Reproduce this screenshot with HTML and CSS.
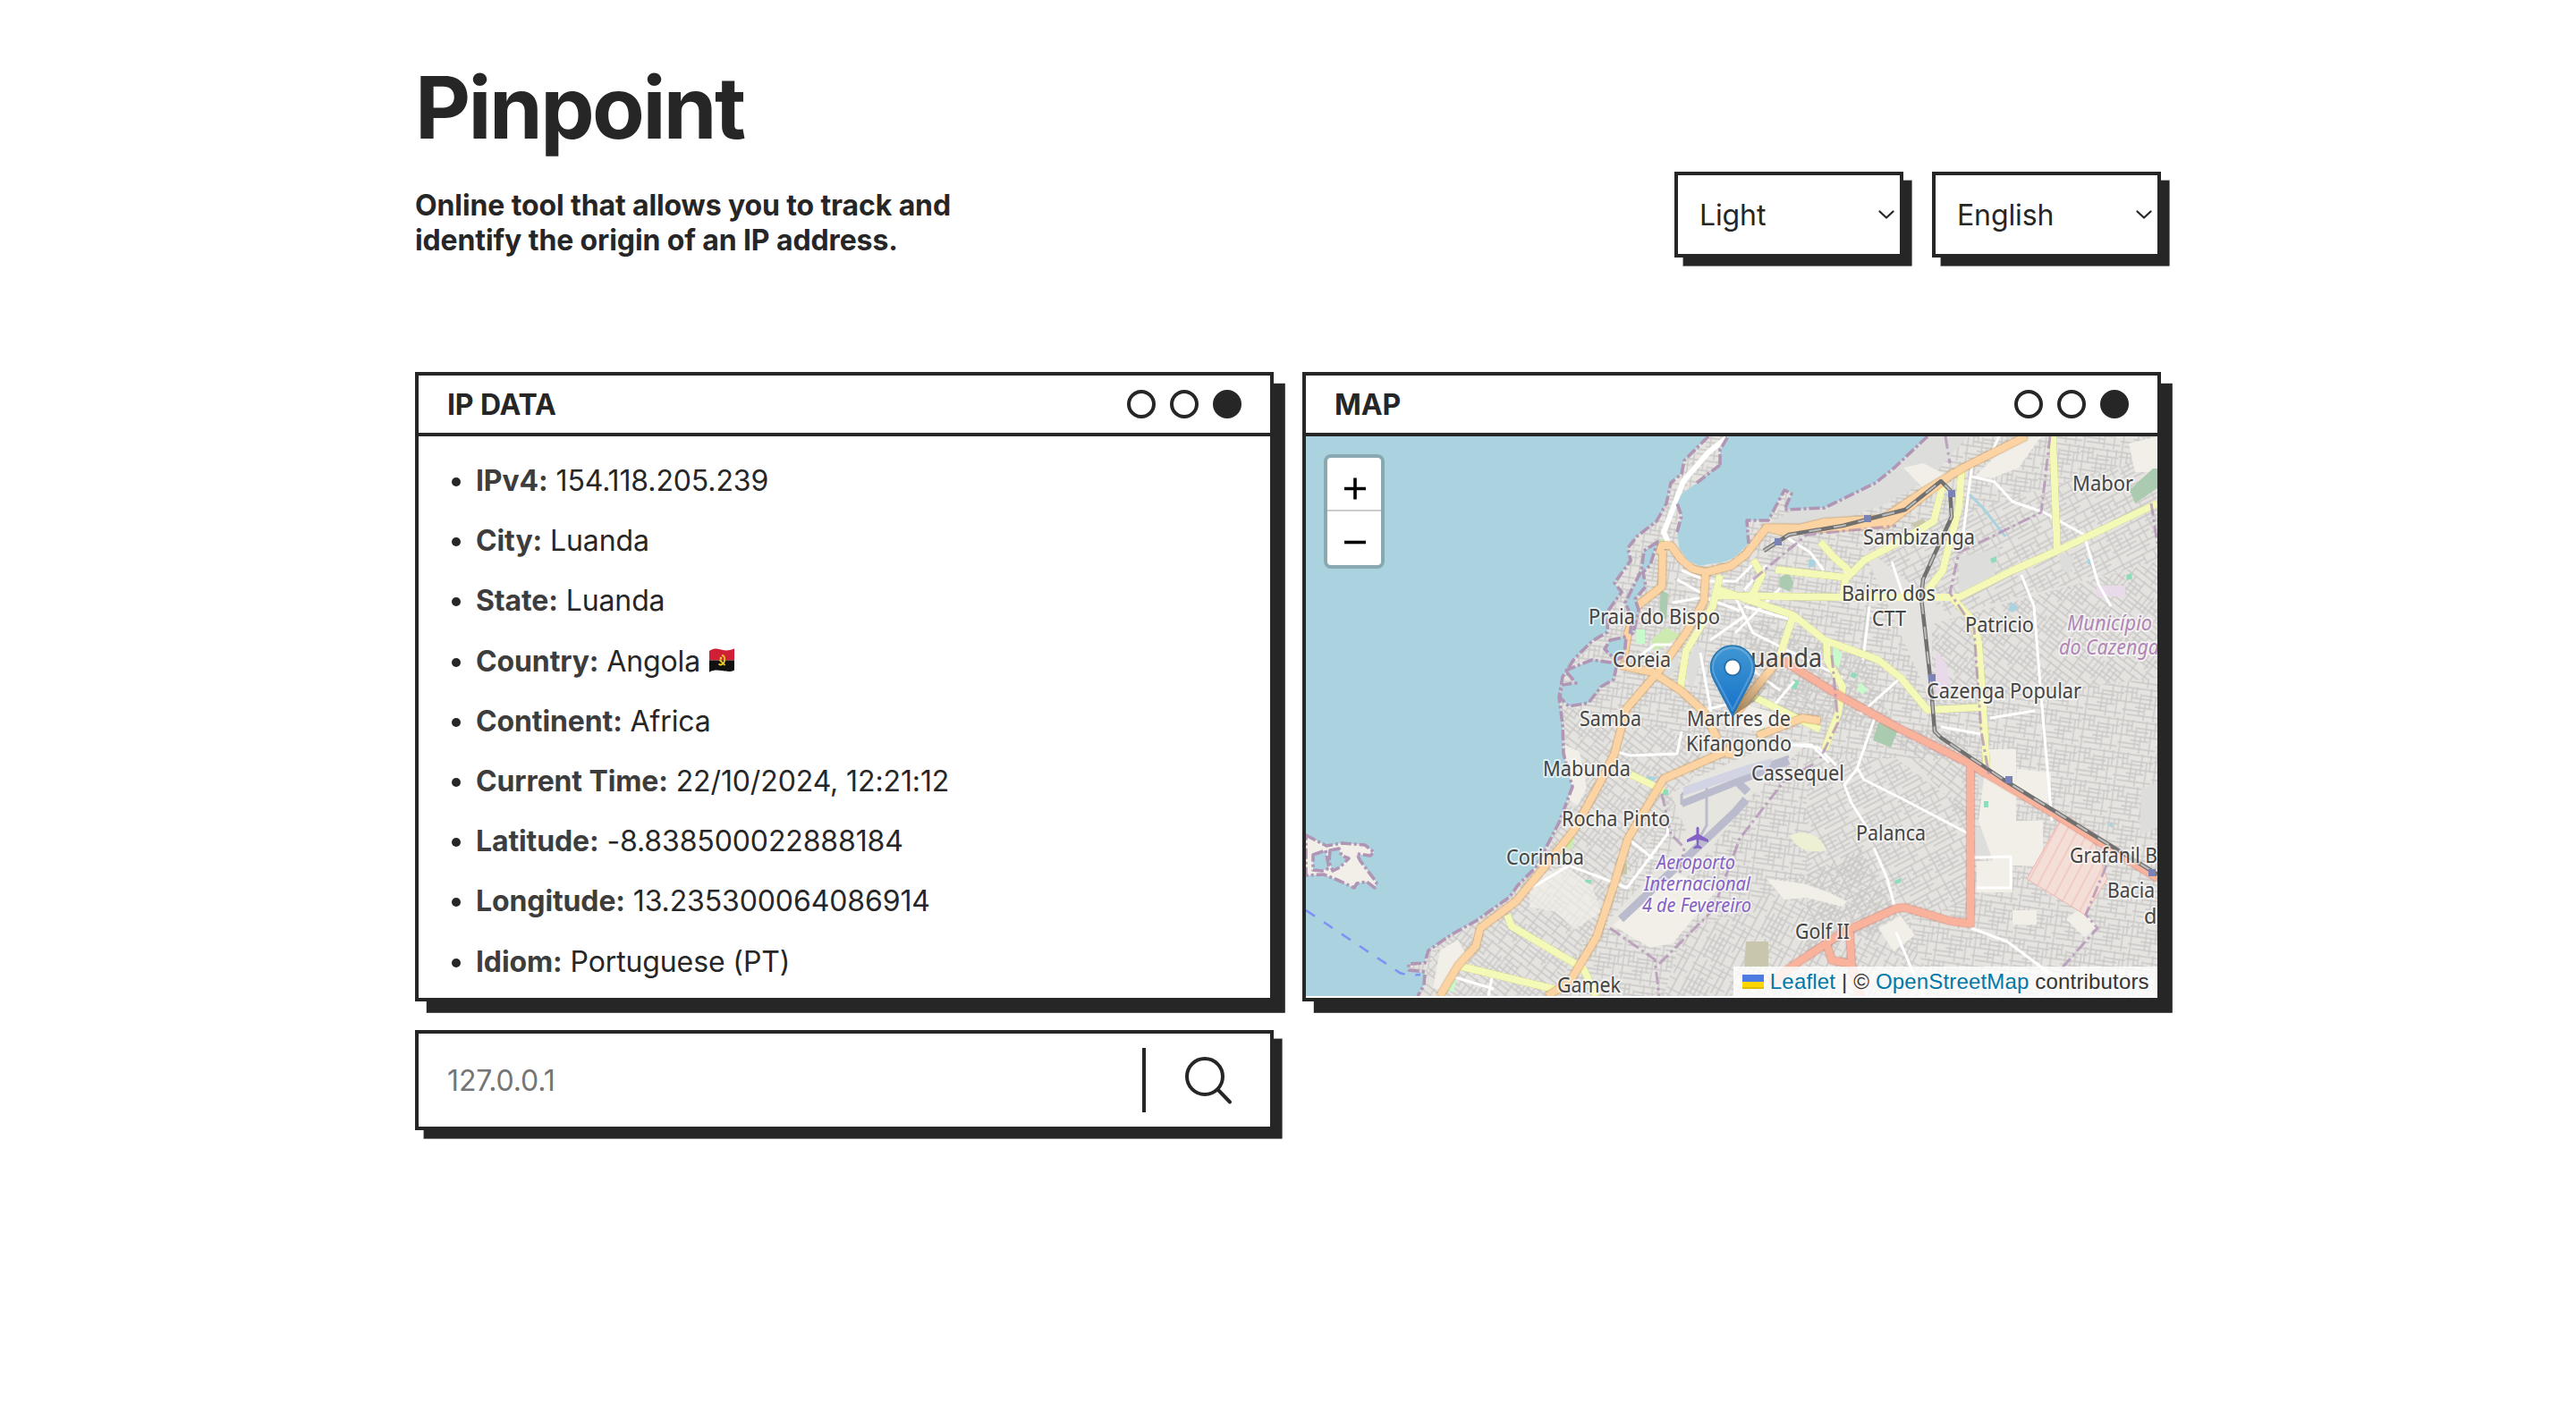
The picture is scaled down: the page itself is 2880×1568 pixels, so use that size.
FILE: index.html
```html
<!DOCTYPE html>
<html lang="en">
<head>
<meta charset="utf-8">
<title>Pinpoint</title>
<link rel="stylesheet" href="styles.css">
</head>
<body>
<div class="page">
  <header class="header">
    <div class="intro">
      <h1 class="title">Pinpoint</h1>
      <p class="subtitle">Online tool that allows you to track and<br>identify the origin of an IP address.</p>
    </div>
    <div class="options">
      <div class="select"><span>Light</span><svg width="18" height="10" viewBox="0 0 18 10"><path d="M1.5 1.5 9 8.5l7.500-7"/></svg></div>
      <div class="select"><span>English</span><svg width="18" height="10" viewBox="0 0 18 10"><path d="M1.500 1.500 9 8.500l7.500-7"/></svg></div>
    </div>
  </header>

  <main class="windows">
    <section class="window">
      <div class="bar"><h2>IP DATA</h2><div class="dots"><i></i><i></i><i class="on"></i></div></div>
      <ul class="data">
        <li><b>IPv4:</b> 154.118.205.239</li>
        <li><b>City:</b> Luanda</li>
        <li><b>State:</b> Luanda</li>
        <li><b>Country:</b> Angola <svg class="flag" width="28" height="27" viewBox="0 0 28 22" preserveAspectRatio="none"><path fill="#d01f36" d="M0 2.500C6-.5 9 .5 14 1.500S24 2 28 .3V11H0z"/><path fill="#111" d="M0 11h28v9c-5 2-9 1-14 .4S5 19.500 0 21.700z"/><path d="M14 6.500c4 0 4.500 6 .5 8-1.500.8-3 .5-4-.3M11.500 10.500l6 5" fill="none" stroke="#f5cf1d" stroke-width="1.600"/><circle cx="13" cy="9" r="1.300" fill="#f5cf1d"/></svg></li>
        <li><b>Continent:</b> Africa</li>
        <li><b>Current Time:</b> 22/10/2024, 12:21:12</li>
        <li><b>Latitude:</b> -8.838500022888184</li>
        <li><b>Longitude:</b> 13.235300064086914</li>
        <li><b>Idiom:</b> Portuguese (PT)</li>
      </ul>
    </section>

    <section class="window">
      <div class="bar"><h2>MAP</h2><div class="dots"><i></i><i></i><i class="on"></i></div></div>
      <div class="map">
        <svg class="tiles" width="952" height="626" viewBox="0 0 952 626">
          <defs>
            <pattern id="s1" width="43" height="37" patternUnits="userSpaceOnUse" patternTransform="rotate(8)"><path class="st" d="M0 2h43M0 7h14M20 9h23M8 13h25M0 18h43M14 23h20M0 27h24M5 32h38M3 0v37M9 2v16M14 0v12M19 7v25M25 18v19M30 0v23M36 9v28M40 0v18"/></pattern>
            <pattern id="s2" width="49" height="37" patternUnits="userSpaceOnUse" patternTransform="rotate(-28)"><path class="st" d="M0 1h49M0 6h29M0 11h18M26 11h23M6 16h43M0 21h30M0 26h49M12 31h30M4 0v37M12 1v20M21 6v20M29 0v16M35 16v21M42 0v26"/></pattern>
            <pattern id="s3" width="41" height="45" patternUnits="userSpaceOnUse" patternTransform="rotate(38)"><path class="st" d="M0 2h41M0 8h21M5 13h36M0 19h22M0 24h41M16 29h25M0 34h28M0 40h41M2 0v45M8 2v22M14 8v32M20 0v18M27 13v32M33 0v29M38 8v26"/></pattern>
            <pattern id="s4" width="51" height="47" patternUnits="userSpaceOnUse" patternTransform="rotate(-62)"><path class="st" d="M0 3h51M0 8h30M9 13h42M0 18h31M0 23h51M0 29h26M20 34h31M0 40h51M3 0v47M9 3v20M15 8v32M22 0v23M28 13v34M35 3v26M41 0v40M47 18v29"/></pattern>
            <pattern id="hatch" width="11" height="11" patternUnits="userSpaceOnUse" patternTransform="rotate(28)"><rect width="11" height="11" fill="#f3dfd8"/><path d="M1 0v11" stroke="#f2c3bd" stroke-width="1.500"/></pattern>
            <path id="land" d="M450 0 423 27 420 42 408 52 403 75 392 95 370 112 360 125 363 139 345 164 353 174 338 195 337 219 320 229 300 249 287 269 283 292 287 322 288 355 298 392 283 432 257 482 237 502 228 515 190 542 163 557 137 575 133 589 115 590 115 597 133 599 132 614 125 626H952V0H695L658 35 637 52 580 80 535 82 543 64 535 60 517 94 493 94 495 120 480 135 470 140 440 145 427 139 417 125 415 107 420 89 415 75 420 64 437 52 463 32 463 15 472 0z"/>
            <clipPath id="clip"><use href="#land"/></clipPath>
            <linearGradient id="pin" x2="0" y2="1"><stop offset="0" stop-color="#4197d3"/><stop offset="1" stop-color="#1671c9"/></linearGradient>
            <linearGradient id="shade" gradientUnits="userSpaceOnUse" x1="477" y1="313" x2="512" y2="262"><stop offset="0" stop-color="#3b2a10" stop-opacity=".55"/><stop offset="1" stop-color="#3b2a10" stop-opacity="0"/></linearGradient>
          </defs>
          <rect width="952" height="626" fill="#aad3df"/>
          <use href="#land" fill="#f0ede7"/>
          <g clip-path="url(#clip)">
            <rect width="952" height="626" fill="#e6e4e0"/>
            <path fill="url(#s1)" d="M0 0h952v626H0z"/>
            <path fill="#e5e3df" d="M620 120 952 20v250L700 300zM280 300l180 40-60 90-130 200H120zM560 360l180 0v160l-180 60zM420 560l200-100 90 166H400z"/>
            <path fill="url(#s2)" d="M620 120 952 20v120L720 200zM560 360h100l80 60v100l-180 60z"/>
            <path fill="url(#s3)" d="M280 300l180 40-60 90-130 200H120zM700 210l252-70v130l-252 30zM650 330h90v100z"/>
            <path fill="url(#s4)" d="M420 560l200-100 90 166H400zM480 200l140 40 40 90-130-20z"/>
            <path fill="#dddddc" d="M520 96 545 82 580 80 655 38 695 0 740 0 700 45 650 75 590 96 530 104zM730 135l45-10-5 30-40 22zM842 130l17 5-5 20-10-8zM750 370h20v25h-18zM748 437h22v33h-22zM934 395l18-8v50l-20 10zM386 248l24-14 8 20-16 22zM420 262l16-30 10 6-14 44z"/>
            <path fill="#f2efe9" d="M668 35 692 60 702 66 720 45 690 30zM748 45l40-40 34-5-25 35-30 12zM920 8l32-8v40l-25 0zM762 350l32 0 0 80 30 0v50l-54 0-18-50zM795 372l38 4 0 35-40-8zM750 475h40v35h-40zM790 530h27v16h-27zM850 540l15-12 20 20-15 12zM515 495l40 5 30 10 20 10-5 6-40-10-25 2zM640 550l25-14 16 22-24 18zM290 345l16 8 8 40-10 20-12-8zM150 575l20-12 10 18-24 40-14-4zM492 300l60 18-40 14-30-8z"/>
            <path fill="#f2efe9" opacity=".7" d="M250 495l40-15 30 22 10 30-30 20-20-20-30-6z"/>
            <path fill="#e6e5e0" d="M335 545 405 470 425 440 408 400 440 380 520 345 565 340 500 400 430 490 345 553z"/>
            <path fill="#f2efe9" d="M343 547l67-60 50 20-50 60-25 5z"/>
            <g fill="none" stroke="#bbbbce"><path stroke-width="9" d="M352 540 480 420 492 406M484 388l10 10"/><path stroke-width="8" d="M420 411 540 363"/><path stroke-width="3" d="M420 400l0 12M448 390v45l-8 14M420 400l120-42"/></g>
            <path fill="#d2d3e3" d="M422 392l70-24 30-8-4 10-96 32z"/>
            <g fill="#cdebb0"><path d="M386 228l16-14 17 8-16 12-14 6zM393 118l8-4 2 20-8 10zM292 452l8-4-2 12-8 4z"/></g>
            <path fill="#aacbb0" d="M921 60 947 36h5v22l-25 17zM530 158l10-6 5 12-4 10-12-6zM397 172l8 4-2 30-8-8zM640 320l22 8-8 20-20-8z"/>
            <path fill="#c8facc" d="M369 216h10v16h-10zM590 235l10 8-4 16-8-6zM158 606l10 2-3 14-8-4zM620 275l8 8 -6 6-6-6z"/>
            <path fill="#8fdcbb" d="M765 137l7-3v6l-5 2zM917 155l6-2 1 6-6 2zM758 408h5v7h-5zM658 497l7-3 0 5-6 2zM545 272l7 2-4 10-5-3zM610 264l7 2-3 5-5-2zM400 395h5v6h-5zM312 496h8l-2 5-6-3zM505 330l8-4 0 6-8 4z"/>
            <path fill="#e8dae8" d="M884 167h32v12h-32zM704 240l12 14 4 20-10 22-6-10z"/>
            <path fill="#aad3df" d="M788 185l10 7-8 5-5-3zM874 137h6v6h-6zM895 434l7-2v6zM562 138h7v8h-7zM376 383l8-3 10 2-8 4z"/>
            <path fill="#c8c7ae" d="M492 565h25v28h-27zM352 478h7v12h-9zM676 98l14-6 8 10-14 4z"/>
            <path fill="#edf0d2" d="M541 446c14-5 32-4 41 17-20 4-34-1-41-17z"/>
            <path fill="url(#hatch)" stroke="#f0b5ab" d="M843 430 806 495 871 535 896 495 880 450z"/>
            <g class="white"><path d="M775 0l-10 22M745 30l-12 95M745 45l25 6 20 22 35 12 45 25 16 55 14 25M800 155l14 35 8 100 12 140M655 140l15 45M630 190l-7 60M637 312l-21 60-14 18 8 20 25 40M616 370l8 14 40 20 82 43M635 460l15 35 8 30M660 555l30 71M744 550l40 15 60 45M747 471l41-1 0 35h-38M710 325l45 8M765 315l50-8M620 310l45-40M480 180l20 40 40 20 60 30M480 220l50-50M490 190l70 20 25 25M540 345l25 0 20 20M536 112l28 18 15 20M441 242l12 66M415 235l-10 20M370 248l20-15 20 0M343 352l20 5 52-2 5-25M254 504l40-24 40 15 25 10 45-60 2-18M160 603l50 15M208 605l-4 21M543 345l30 3 20 20M360 450l28 22M480 163l25-25M490 172l25-28M420 150l30 12 30 0M415 160l32 18M410 186l35-6 40 15M438 308l40-10M452 228l40-28M500 262l30 22M524 300l22-26"/></g>
            <path d="M470 2 450 18 422 50 405 95 400 107 408 125" fill="none" stroke="#fff" stroke-width="6"/>
            <g class="yellow"><path d="M835 0 840 128M952 75 840 128 790 150 730 180H600L460 178M733 38 730 80 712 150 695 172M713 50 702 95 660 120 625 138 605 158 525 149M604 155 600 180M575 118 590 135 605 148 605 158M463 172 545 200 580 228 640 250 665 270 695 306 755 303M582 228 583 250 600 280 595 310 580 350M722 180 745 205 752 230 757 300 761 370M545 200 530 245M500 138 510 155 498 180M502 292 575 328M463 155 455 190 425 240 418 285M225 535 230 548 310 595 325 626M170 592 285 620M363 378 400 396"/></g>
            <g class="orange"><path d="M401 132 396 128 398 122 408 122 420 138 432 148 447 152 475 145 492 132 515 102 535 107 580 96 645 92 690 62 735 35 805 0M515 102 580 103 650 98 725 40M399 128 398 168 370 190 360 220 355 250M447 152 445 185 425 220 395 262 358 305 345 355 330 385 300 440 268 480 235 520 195 550 190 570 170 592 150 626M352 256 388 264 420 285 445 308 460 338M475 350 400 383 360 450 345 500 325 560 295 610 270 626M505 335 555 315 575 318M475 345l-2 14M530 248 500 285 480 312"/></g>
            <g class="red"><path d="M532 250 600 292 660 325 740 365 850 430 952 494M743 367V545L720 542 670 527 660 528 600 555 540 595 520 612M608 555 610 590 588 586 583 570M610 590 620 626"/></g>
            <g class="rail"><path d="M512 128 540 110 600 100 670 82 710 50 720 60 722 90 690 160 688 180 698 270 703 330 710 337 780 384 952 490"/><path class="dash" d="M512 128 540 110 600 100 670 82 710 50 720 60 722 90 690 160 688 180 698 270 703 330 710 337 780 384 952 490"/></g>
            <path d="M742 65l15 15 25 32" fill="none" stroke="#aad3df" stroke-width="3"/>
            <g class="border"><path d="M832 0 822 85 730 130 720 175 747 215 755 330 764 380M945 75l7 45M895 480 872 535 885 550 845 595M588 245 595 320 575 360M340 550l50 35 5 41M395 590l60-60 30-80 50-65 35-20M398 400l10 45 15 15-5 30M715 0l5 30M500 160l60-50 100-10"/></g>
          </g>
          <path class="coast" d="M450 0 423 27 420 42 408 52 403 75 392 95 370 112 360 125 363 139 345 164 353 174 338 195 337 219 320 229 300 249 287 269 283 292 287 322 288 355 298 392 283 432 257 482 237 502 228 515 190 542 163 557 137 575 133 589 115 590 115 597 133 599 132 614 125 626M695 0 658 35 637 52 580 80 535 82 543 64 535 60 517 94 493 94 495 120M463 32 463 15 472 0M437 52 463 32M415 107 420 89 415 75"/>
          <path class="coast water" d="M393 118l-15 10-3 22-12 24-6 12 8 18-3 18 4-2 6-26-4-12 12-14-3-16 8-8z"/>
          <path class="coast water" d="M340 228l18-4-2 22-10 4-12-12zM290 262l30-12 28 4-4 18-14 8-14 18-22 4-10-10 2-14 16-2z"/>
          <path class="coast isle" d="M0 446 23 458 40 455 66 457 76 465 72 469 57 467 61 475 79 499 77 505 68 498 57 500 54 505 35 496 20 490 0 491z"/>
          <path class="coast water" d="M8 468l14-5 4 20-8 3-10-1zM27 463l10-2 3 8 8 3-10 10-8 4-4-10z"/>
          <path d="M0 530 45 560 105 600 115 603 128 602" fill="none" stroke="#7f8ff5" stroke-width="2.500" stroke-dasharray="12 12"/>
          <g fill="#7a82b6"><path d="M524 114h8v8h-8zM624 88h8v8h-8zM718 60h8v8h-8zM696 266h8v8h-8zM782 380h8v8h-8zM942 484h8v8h-8z"/></g>
          <path fill="#8461c4" d="M436.500 438q1.500-3 3 0v7l10.500 6v3l-10.500-3-.5 6 3.500 2.500v2l-4.500-1-4.500 1v-2l3.500-2.500-.5-6-10.500 3v-3l10.500-6z"/>
          <g class="label">
            <text x="316" y="210" textLength="147" lengthAdjust="spacingAndGlyphs">Praia do Bispo</text>
            <text x="343" y="258" textLength="65" lengthAdjust="spacingAndGlyphs">Coreia</text>
            <text x="306" y="324" textLength="69" lengthAdjust="spacingAndGlyphs">Samba</text>
            <text x="426" y="324" textLength="116" lengthAdjust="spacingAndGlyphs">Martíres de</text>
            <text x="425" y="352" textLength="118" lengthAdjust="spacingAndGlyphs">Kifangondo</text>
            <text x="265" y="380" textLength="98" lengthAdjust="spacingAndGlyphs">Mabunda</text>
            <text x="286" y="436" textLength="121" lengthAdjust="spacingAndGlyphs">Rocha Pinto</text>
            <text x="224" y="479" textLength="87" lengthAdjust="spacingAndGlyphs">Corimba</text>
            <text x="281" y="622" textLength="71" lengthAdjust="spacingAndGlyphs">Gamek</text>
            <text x="623" y="121" textLength="125" lengthAdjust="spacingAndGlyphs">Sambizanga</text>
            <text x="599" y="184" textLength="105" lengthAdjust="spacingAndGlyphs">Bairro dos</text>
            <text x="633" y="212" textLength="38" lengthAdjust="spacingAndGlyphs">CTT</text>
            <text x="737" y="219" textLength="77" lengthAdjust="spacingAndGlyphs">Patricio</text>
            <text x="857" y="61" textLength="68" lengthAdjust="spacingAndGlyphs">Mabor</text>
            <text x="694" y="293" textLength="173" lengthAdjust="spacingAndGlyphs">Cazenga Popular</text>
            <text x="498" y="385" textLength="104" lengthAdjust="spacingAndGlyphs">Cassequel</text>
            <text x="615" y="452" textLength="78" lengthAdjust="spacingAndGlyphs">Palanca</text>
            <text x="547" y="562" textLength="61" lengthAdjust="spacingAndGlyphs">Golf II</text>
            <text x="854" y="477" textLength="98" lengthAdjust="spacingAndGlyphs">Grafanil B</text>
            <text x="896" y="516" textLength="53" lengthAdjust="spacingAndGlyphs">Bacia</text>
            <text x="937" y="545">d</text>
            <text class="city" x="483" y="258" textLength="94" lengthAdjust="spacingAndGlyphs">Luanda</text>
            <g class="area"><text x="851" y="217" textLength="95" lengthAdjust="spacingAndGlyphs">Município</text><text x="842" y="244" textLength="112" lengthAdjust="spacingAndGlyphs">do Cazenga</text></g>
            <g class="air"><text x="392" y="484" textLength="88" lengthAdjust="spacingAndGlyphs">Aeroporto</text><text x="378" y="508" textLength="119" lengthAdjust="spacingAndGlyphs">Internacional</text><text x="376" y="532" textLength="122" lengthAdjust="spacingAndGlyphs">4 de Fevereiro</text></g>
          </g>
          <path d="M477 313 500 268l16-14 8 16-22 26z" fill="url(#shade)"/>
          <path d="M477 312.500 456.500 273C454 268 452.500 263 452.500 258.500a24.500 24.500 0 0 1 49 0C501.500 263 500 268 497.500 273z" fill="url(#pin)" stroke="#2b76ad" stroke-width="1.500"/>
          <path d="M477 306 459 271.500C456.500 267 455 262.500 455 258.500a22 22 0 0 1 44 0C499 262.500 497.500 267 495 271.500z" fill="none" stroke="#fff" stroke-opacity=".2" stroke-width="2"/>
          <circle cx="477" cy="258.500" r="9" fill="#fff" stroke="#2770a8" stroke-width="2"/>
        </svg>
        <div class="zoom">
          <svg width="60" height="58" viewBox="0 0 60 58"><path d="M19 34.500h24M31 22.500v24"/></svg>
          <svg width="60" height="60" viewBox="0 0 60 60"><path d="M19 34.500h24"/></svg>
        </div>
        <div class="attribution"><svg width="24" height="16" viewBox="0 0 24 16"><path fill="#4c7be1" d="M0 0h24v8H0z"/><path fill="#ffd500" d="M0 8h24v6H0z"/><path fill="#e0bc00" d="M0 14h24v2H0z"/></svg> <a>Leaflet</a> <span class="sep">|</span> © <a>OpenStreetMap</a> contributors</div>
      </div>
    </section>
  </main>

  <div class="search">
    <span class="placeholder">127.0.0.1</span>
    <span class="divider"></span>
    <svg class="glass" width="56" height="56" viewBox="0 0 56 56"><circle cx="24" cy="24" r="20"/><path d="M38.500 38.500 52 52.500"/></svg>
  </div>
</div>
</body>
</html>
```
FILE: styles.css
```css
* { box-sizing: border-box; margin: 0; padding: 0; }

body {
  min-height: 100vh;
  background: #fff;
  color: #262626;
  font: 32px/39px Inter, sans-serif;
  letter-spacing: -.12px;
}

.page { width: 1952px; margin: 0 auto; padding-top: 62px; }

.header { display: flex; justify-content: space-between; align-items: flex-end; height: 226px; }
.title { font-size: 96px; line-height: 116px; font-weight: 700; letter-spacing: -2.600px; }
.subtitle { margin-top: 32px; font-weight: 700; }

.options { display: flex; gap: 32px; }
.select {
  display: flex; align-items: center; justify-content: space-between;
  width: 256px; height: 96px; padding: 0 6px 0 24px;
  border: 4px solid #262626; background: #fff;
  box-shadow: 9.6px 9.6px 0 #262626;
}
.select svg { fill: none; stroke: #262626; stroke-width: 2.2; stroke-linecap: round; stroke-linejoin: round; }

.windows { display: flex; gap: 32px; margin-top: 128px; }
.window {
  width: 960px; height: 704px;
  border: 4px solid #262626; background: #fff;
  box-shadow: 12.8px 12.8px 0 #262626;
}
.bar {
  display: flex; align-items: center; justify-content: space-between;
  height: 68px; padding: 0 32px;
  border-bottom: 4px solid #262626;
}
.bar h2 { font-size: 32px; font-weight: 700; }
.dots { display: flex; gap: 16px; }
.dots i { width: 32px; height: 32px; border: 4px solid #262626; border-radius: 50%; }
.dots .on { background: #262626; }

.data { padding: 16px 0 0 64px; line-height: 67.2px; }
.data b { font-weight: 700; color: #3d3d3d; }
.flag { margin-left: 1px; vertical-align: -1px; }

.map { position: relative; height: 626px; overflow: hidden; }
.tiles { display: block; }
.st { fill: none; stroke: #c8c7c6; stroke-width: 1.3; }
.white path { fill: none; stroke: #fff; stroke-width: 3; stroke-linejoin: round; }
.yellow path { fill: none; stroke: #f5f9b8; stroke-width: 8; stroke-linejoin: round; }
.orange path { fill: none; stroke: #fcd3a2; stroke-width: 8; stroke-linejoin: round; }
.yellow { filter: drop-shadow(0 0 .6px #a9ad45); }
.orange { filter: drop-shadow(0 0 .8px #c07a26); }
.red { filter: drop-shadow(0 0 .8px #d0604a); }
.red path { fill: none; stroke: #f9b29c; stroke-width: 8; stroke-linejoin: round; }
.rail path { fill: none; stroke: #707070; stroke-width: 4.5; stroke-linejoin: round; }
.rail .dash { stroke: #bbb; stroke-width: 2.2; stroke-dasharray: 14 14; }
.border path { fill: none; stroke: #b08fb3; stroke-width: 3; stroke-dasharray: 14 4 3 4; opacity: .75; }
.coast { fill: none; stroke: #b095b5; stroke-width: 3.6; stroke-dasharray: 12 3 3 3; stroke-linejoin: round; }
.water { fill: #aad3df; }
.isle { fill: #f2efe9; }

.label text {
  font: 23.400px "Noto Sans", sans-serif;
  letter-spacing: 0;
  fill: #444; stroke: #fff; stroke-opacity: .65; stroke-width: 4; stroke-linejoin: round; paint-order: stroke;
}
.label .city { font-size: 29px; }
.label .area text { font-style: italic; fill: #b085b5; }
.label .air text { font-style: italic; font-size: 22px; fill: #8461c4; }

.zoom {
  position: absolute; left: 20px; top: 20px;
  width: 68px; border: 4px solid rgba(0, 0, 0, .2); border-radius: 8px;
  background: #fff; background-clip: padding-box;
}
.zoom svg { display: block; fill: none; stroke: #000; stroke-width: 3.600; }
.zoom svg:first-child { box-sizing: content-box; border-bottom: 2px solid #ccc; }

.attribution {
  position: absolute; right: 0; bottom: 0;
  width: 474px; height: 33px; padding: 0 10px; text-align: right; white-space: nowrap;
  background: rgba(255, 255, 255, .8); color: #333;
  font: 24px/33px "Liberation Sans", sans-serif;
  letter-spacing: .17px;
}
.attribution a { color: #0078a8; }

.search {
  display: flex; align-items: center;
  width: 960px; height: 112px; margin-top: 32px; padding: 0 41px 0 32px;
  border: 4px solid #262626; background: #fff;
  box-shadow: 9.6px 9.6px 0 #262626;
}
.placeholder { flex: 1; color: #757575; }
.divider { width: 4px; height: 72px; margin-right: 42px; background: #262626; }
.glass { fill: none; stroke: #262626; stroke-width: 4; stroke-linecap: round; }
```
